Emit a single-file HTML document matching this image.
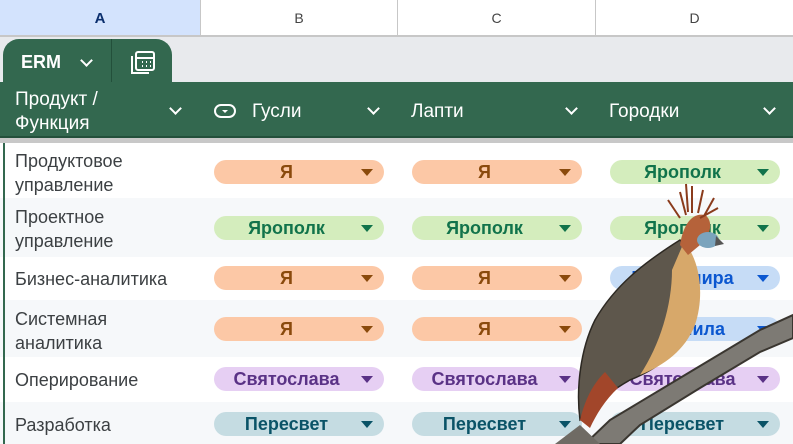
<!DOCTYPE html>
<html><head><meta charset="utf-8"><style>
*{margin:0;padding:0;box-sizing:border-box}
body{width:793px;height:444px;overflow:hidden;background:#fff;font-family:"Liberation Sans",Arial,sans-serif;position:relative}
.abs{position:absolute}
.colh{position:absolute;top:0;height:37px;border-right:1px solid #c7c7c7;border-bottom:2px solid #c7c7c7;font-size:14px;color:#444;text-align:center;line-height:37px;background:#fff}
.row{position:absolute;left:0;width:793px}
.lbl{position:absolute;left:15px;font-size:18px;color:#3c4043;line-height:24px}
.chip{position:absolute;width:170px;height:24px;border-radius:12px;font-weight:bold;font-size:18px;line-height:25px}
.chip span{position:absolute;left:0;width:145px;text-align:center}
.chip i{position:absolute;right:11px;top:9px;width:0;height:0;border-left:6px solid transparent;border-right:6px solid transparent;border-top:7px solid currentColor}
.o{background:#fcc8a6;color:#8a4a0c}
.g{background:#d4edbd;color:#11734b}
.b{background:#c6dcf6;color:#0b57d0}
.p{background:#e6cff3;color:#5a3286}
.t{background:#c5dce2;color:#0a5367}
.hd{position:absolute;top:82px;height:56px;color:#fff;font-size:19px}
.chev{position:absolute;width:9px;height:9px;border-right:2px solid #fff;border-bottom:2px solid #fff;transform:rotate(45deg)}
</style></head><body>
<div class="colh" style="left:0;width:201px;background:#d3e3fd;color:#0b2f6e;font-weight:bold;font-size:15px">A</div>
<div class="colh" style="left:201px;width:197px">B</div>
<div class="colh" style="left:398px;width:198px">C</div>
<div class="colh" style="left:596px;width:197px;border-right:none">D</div>
<div class="abs" style="left:0;top:37px;width:793px;height:45px;background:#e8eaed"></div>
<div class="abs" style="left:3px;top:39px;width:169px;height:44px;background:#33684f;border-radius:16px 16px 0 0"></div>
<div class="abs" style="left:111px;top:39px;width:1px;height:44px;background:#23503b"></div>
<div class="abs" style="left:21px;top:52px;color:#fff;font-weight:bold;font-size:18px">ERM</div>
<div class="chev" style="left:82px;top:56px"></div>
<svg class="abs" style="left:130px;top:50px" width="26" height="26" viewBox="0 0 26 26" fill="none" stroke="#fff" stroke-width="2"><path d="M2 6v17h17"/><rect x="6" y="2" width="18" height="18" rx="2"/><path d="M6 8h18M12 12h1M16 12h1M20 12h1M12 16h1M16 16h1M20 16h1"/></svg>
<div class="abs" style="left:0;top:82px;width:793px;height:56px;background:#33684f;border-bottom:2px solid #23503b"></div>
<div class="abs" style="left:0;top:138px;width:793px;height:5px;background:#c8c8c8"></div>
<div class="hd" style="left:15px;line-height:24px;top:88px">Продукт /<br>Функция</div>
<div class="chev" style="left:171px;top:104px"></div>
<svg class="abs" style="left:214px;top:103px" width="22" height="16" viewBox="0 0 22 16" fill="none" stroke="#fff" stroke-width="2"><rect x="1" y="2" width="20" height="12" rx="6"/><path d="M8 7h6l-3 3z" fill="#fff" stroke="none"/></svg>
<div class="hd" style="left:252px;line-height:60px">Гусли</div>
<div class="chev" style="left:369px;top:104px"></div>
<div class="hd" style="left:411px;line-height:60px">Лапти</div>
<div class="chev" style="left:567px;top:104px"></div>
<div class="hd" style="left:609px;line-height:60px">Городки</div>
<div class="chev" style="left:765px;top:104px"></div>

<div class="row" style="top:143px;height:55px;background:#fff"></div>
<div class="row" style="top:198px;height:59px;background:#f6f8fa"></div>
<div class="row" style="top:257px;height:43px;background:#fff"></div>
<div class="row" style="top:300px;height:57px;background:#f6f8fa"></div>
<div class="row" style="top:357px;height:45px;background:#fff"></div>
<div class="row" style="top:402px;height:42px;background:#f6f8fa"></div>
<div class="abs" style="left:3px;top:143px;width:2px;height:301px;background:#33684f"></div>

<div class="lbl" style="top:149px">Продуктовое<br>управление</div>
<div class="lbl" style="top:205px">Проектное<br>управление</div>
<div class="lbl" style="top:267px">Бизнес-аналитика</div>
<div class="lbl" style="top:307px">Системная<br>аналитика</div>
<div class="lbl" style="top:368px">Оперирование</div>
<div class="lbl" style="top:413px">Разработка</div>

<div class="chip o" style="left:214px;top:160px"><span>Я</span><i></i></div>
<div class="chip o" style="left:412px;top:160px"><span>Я</span><i></i></div>
<div class="chip g" style="left:610px;top:160px"><span>Ярополк</span><i></i></div>
<div class="chip g" style="left:214px;top:216px"><span>Ярополк</span><i></i></div>
<div class="chip g" style="left:412px;top:216px"><span>Ярополк</span><i></i></div>
<div class="chip g" style="left:610px;top:216px"><span>Ярополк</span><i></i></div>
<div class="chip o" style="left:214px;top:266px"><span>Я</span><i></i></div>
<div class="chip o" style="left:412px;top:266px"><span>Я</span><i></i></div>
<div class="chip b" style="left:610px;top:266px"><span>Владимира</span><i></i></div>
<div class="chip o" style="left:214px;top:317px"><span>Я</span><i></i></div>
<div class="chip o" style="left:412px;top:317px"><span>Я</span><i></i></div>
<div class="chip b" style="left:610px;top:317px"><span>Людмила</span><i></i></div>
<div class="chip p" style="left:214px;top:367px"><span>Святослава</span><i></i></div>
<div class="chip p" style="left:412px;top:367px"><span>Святослава</span><i></i></div>
<div class="chip p" style="left:610px;top:367px"><span>Святослава</span><i></i></div>
<div class="chip t" style="left:214px;top:412px"><span>Пересвет</span><i></i></div>
<div class="chip t" style="left:412px;top:412px"><span>Пересвет</span><i></i></div>
<div class="chip t" style="left:610px;top:412px"><span>Пересвет</span><i></i></div>

<svg class="abs" style="left:0;top:0" width="793" height="444" viewBox="0 0 793 444">
<path d="M585 444 L610 420 L680 378 L760 330 L793 315 L793 338 L760 352 L700 388 L640 425 L620 444Z" fill="#7d7a74" stroke="#3a3630" stroke-width="2"/>
<path d="M555 444 L580 425 L600 444Z" fill="#6f6b64"/>
<path d="M680 240 C695 255 700 290 692 320 C682 350 660 368 630 380 C612 390 600 400 592 412 L580 420 C576 390 580 350 595 320 C615 285 645 262 680 240Z" fill="#5e574c" stroke="#2c2822" stroke-width="1.5"/>
<path d="M684 242 C700 260 705 295 695 325 C685 350 665 365 640 375 C660 345 672 305 672 270Z" fill="#d7a86a"/>
<path d="M580 420 C585 400 592 385 605 372 L618 388 C605 400 596 415 590 428Z" fill="#a2462a"/>
<path d="M680 245 C683 225 692 212 705 215 C713 220 712 235 700 245 L688 255Z" fill="#b5623a"/>
<ellipse cx="708" cy="240" rx="11" ry="8" fill="#7ba4bd"/>
<path d="M716 236 L724 244 L715 246Z" fill="#555"/>
<path d="M680 218 L668 200 M686 215 L680 192 M692 213 L692 186 M698 213 L703 190 M704 216 L714 198 M688 212 L686 184 M700 218 L718 208" stroke="#8a3b1c" stroke-width="2"/>
</svg>
</body></html>
